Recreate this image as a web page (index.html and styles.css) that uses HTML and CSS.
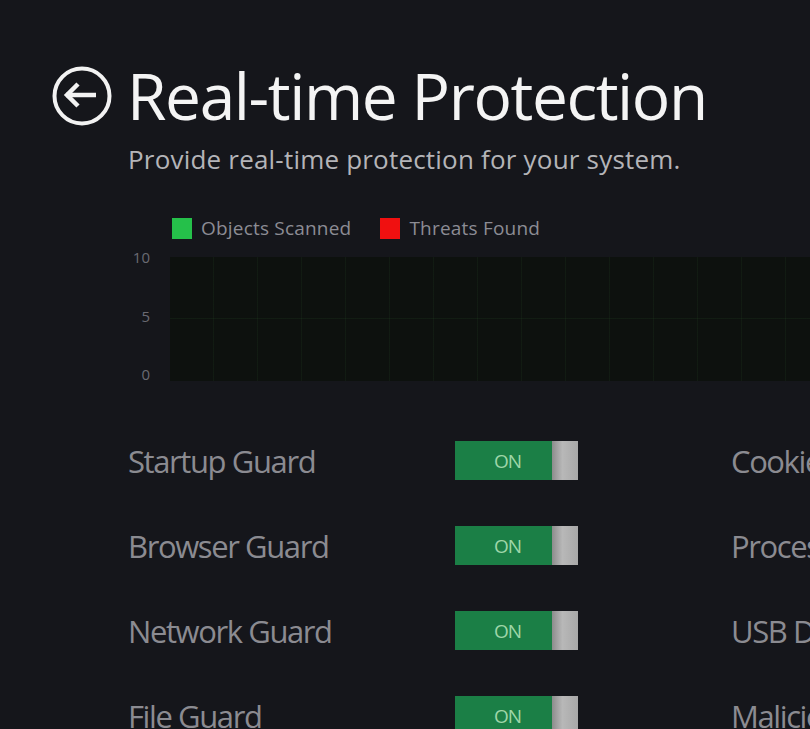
FILE: index.html
```html
<!DOCTYPE html>
<html>
<head>
<meta charset="utf-8">
<link rel="stylesheet" href="styles.css">
</head>
<body>
<div class="page">
  <header class="header">
    <svg class="back" width="62" height="62" viewBox="0 0 62 62">
      <circle cx="31" cy="31" r="27.5" fill="none" stroke="#f2f2f2" stroke-width="4"/>
      <path d="M15 30 H45" stroke="#f2f2f2" stroke-width="4.5" fill="none"/>
      <path d="M27 19 L16 30 L27 41" stroke="#f2f2f2" stroke-width="4.5" fill="none" stroke-linejoin="miter"/>
    </svg>
    <h1 class="title">Real-time Protection</h1>
  </header>
  <p class="subtitle">Provide real-time protection for your system.</p>

  <section class="chart">
    <div class="legend">
      <span class="swatch green"></span><span class="legend-label">Objects Scanned</span>
      <span class="swatch red"></span><span class="legend-label">Threats Found</span>
    </div>
    <div class="plot-row">
      <div class="axis">
        <span>10</span><span>5</span><span>0</span>
      </div>
      <div class="plot"></div>
    </div>
  </section>

  <section class="guards">
    <div class="label">Startup Guard</div>
    <div class="toggle"><span class="on">ON</span><span class="thumb"></span></div>
    <div class="label right">Cookie Guard</div>

    <div class="label">Browser Guard</div>
    <div class="toggle"><span class="on">ON</span><span class="thumb"></span></div>
    <div class="label right">Process Guard</div>

    <div class="label">Network Guard</div>
    <div class="toggle"><span class="on">ON</span><span class="thumb"></span></div>
    <div class="label right">USB Disk Guard</div>

    <div class="label">File Guard</div>
    <div class="toggle"><span class="on">ON</span><span class="thumb"></span></div>
    <div class="label right">Malicious Website Guard</div>
  </section>
</div>
</body>
</html>
```
FILE: styles.css
```css
html, body {
  margin: 0;
  padding: 0;
  background: #15161b;
  width: 810px;
  height: 729px;
  overflow: hidden;
}
.page {
  padding: 65px 0 0 51px;
  font-family: "Open Sans", "Noto Sans", sans-serif;
  white-space: nowrap;
}
.header {
  display: flex;
  align-items: center;
  gap: 14px;
  height: 62px;
}
.back {
  flex: none;
}
.title {
  margin: 0;
  font-weight: 400;
  font-size: 64px;
  letter-spacing: -1.4px;
  color: #f4f4f4;
  line-height: 62px;
}
.subtitle {
  margin: 17px 0 0 77px;
  font-size: 26px;
  letter-spacing: 0.2px;
  color: #b4b4b8;
  line-height: 30px;
}
.chart {
  margin: 42px 0 0 77px;
}
.legend {
  display: flex;
  align-items: center;
  height: 24px;
  padding-left: 44px;
}
.swatch {
  width: 20px;
  height: 21px;
  margin-right: 9px;
}
.swatch.green { background: #25c04a; }
.swatch.red { background: #f01010; margin-left: 29px; }
.legend-label {
  font-size: 19px;
  letter-spacing: 0.2px;
  color: #8c8c94;
}
.plot-row {
  display: flex;
  align-items: flex-start;
  margin-top: 17px;
}
.axis {
  width: 42px;
  height: 133px;
  display: flex;
  flex-direction: column;
  justify-content: space-between;
  align-items: flex-end;
  padding-right: 20px;
  box-sizing: border-box;
  font-size: 15px;
  color: #6a6a72;
  margin-top: -8px;
  margin-bottom: -1px;
  line-height: 16px;
}
.plot {
  flex: 1;
  height: 124px;
  background-color: #0d110e;
  background-image:
    linear-gradient(to bottom, transparent 61px, rgba(40,80,40,0.18) 61px, rgba(40,80,40,0.18) 62px, transparent 62px),
    repeating-linear-gradient(to right, transparent 0, transparent 43px, rgba(40,80,40,0.16) 43px, rgba(40,80,40,0.16) 44px);
}
.guards {
  display: grid;
  grid-template-columns: 327px 123px 153px 79px;
  grid-auto-rows: 85px;
  margin: 37px 0 0 77px;
  align-items: center;
}
.label {
  font-size: 31px;
  letter-spacing: -1.4px;
  color: #8b8b91;
  line-height: 40px;
  overflow: hidden;
}
.label.right {
  grid-column: 4;
}
.toggle {
  grid-column: 2;
  display: flex;
  height: 39px;
}
.on {
  flex: 1;
  background: #1b7f46;
  color: #9fd6a8;
  font-size: 19px;
  display: flex;
  align-items: center;
  justify-content: center;
  letter-spacing: -1px;
  padding-left: 8px;
}
.thumb {
  width: 26px;
  background: linear-gradient(to right, #8c8c8c, #b8b8b8 40%, #a8a8a8);
}
```
